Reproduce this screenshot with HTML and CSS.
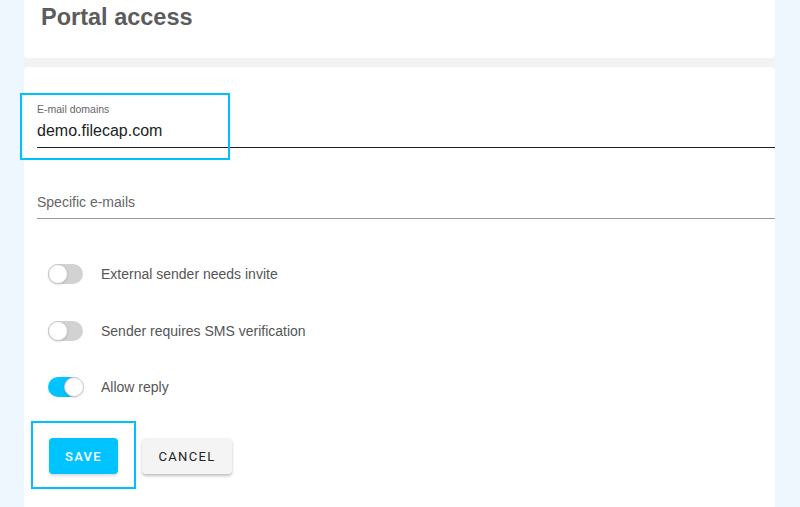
FILE: index.html
```html
<!DOCTYPE html>
<html lang="en">
<head>
    <meta charset="UTF-8">
    <meta name="viewport" content="width=device-width, initial-scale=1.0">
    <title>Portal access</title>
    <link rel="stylesheet" href="styles.css">
</head>
<body>
    <div class="page">
        <!-- header card -->
        <div class="card card-head">
            <h1 class="title">Portal access</h1>
        </div>

        <!-- settings form -->
        <form class="card card-body">
            <div class="field field-filled">
                <label class="field-label" for="domains">E-mail domains</label>
                <input class="field-input" id="domains" name="domains" type="text" value="demo.filecap.com">
                <span class="focus-box focus-field"></span>
            </div>

            <div class="field field-empty">
                <input class="field-input" id="emails" name="emails" type="text" placeholder="Specific e-mails">
            </div>

            <ul class="toggles">
                <li class="toggle-row">
                    <input class="toggle" type="checkbox" id="invite" name="invite">
                    <label for="invite">External sender needs invite</label>
                </li>
                <li class="toggle-row">
                    <input class="toggle" type="checkbox" id="sms" name="sms">
                    <label for="sms">Sender requires SMS verification</label>
                </li>
                <li class="toggle-row">
                    <input class="toggle" type="checkbox" id="reply" name="reply" checked>
                    <label for="reply">Allow reply</label>
                </li>
            </ul>

            <div class="actions">
                <div class="save-wrap">
                    <button class="btn btn-save" type="submit">Save</button>
                    <span class="focus-box focus-save"></span>
                </div>
                <button class="btn btn-cancel" type="button">Cancel</button>
            </div>
        </form>
    </div>
</body>
</html>
```

FILE: styles.css
```css
* {
    box-sizing: border-box;
}

body {
    margin: 0;
    background: #eef6fe;
    font-family: "Liberation Sans", Arial, sans-serif;
    color: #555;
}

.page {
    margin: 0 25px 0 24px;
    height: 507px;
    background: #f2f2f2;
    display: flex;
    flex-direction: column;
    gap: 9px;
}

.card {
    background: #fff;
}

/* header */

.card-head {
    height: 58px;
    padding: 3px 0 0 17px;
    border-radius: 0 0 4px 4px;
}

.title {
    margin: 0;
    font-size: 23.5px;
    line-height: 28px;
    font-weight: bold;
    color: #5c5c5c;
}

/* body */

.card-body {
    flex: 1;
    padding: 35px 0 0 13px;
    border-radius: 4px 4px 0 0;
}

.field {
    position: relative;
    display: flex;
    flex-direction: column;
}

.field-label {
    font-size: 10.5px;
    line-height: 14px;
    color: #666;
}

.field-input {
    -webkit-appearance: none;
    appearance: none;
    border: 0;
    outline: none;
    padding: 0;
    background: transparent;
    font-family: inherit;
}

.field-filled .field-input {
    margin-top: 4px;
    height: 28px;
    padding-bottom: 5px;
    font-size: 16px;
    color: #222;
    border-bottom: 1px solid #222;
}

.field-empty {
    margin-top: 41px;
}

.field-empty .field-input {
    height: 30px;
    padding-bottom: 3px;
    font-size: 14px;
    border-bottom: 1px solid #999;
}

.field-empty .field-input::placeholder {
    color: #666;
}

/* highlight frames */

.focus-box {
    position: absolute;
    border: 2px solid #00c0ff;
    pointer-events: none;
}

.focus-field {
    left: -17px;
    top: -9px;
    width: 210px;
    height: 67px;
}

.focus-save {
    left: -18px;
    top: -17px;
    width: 105px;
    height: 68px;
}

/* toggles */

.toggles {
    list-style: none;
    margin: 45px 0 0;
    padding: 0 0 0 11px;
    display: flex;
    flex-direction: column;
    gap: 36.5px;
}

.toggle-row {
    display: flex;
    align-items: center;
    gap: 18px;
    height: 20px;
    font-size: 14px;
    color: #555;
}

.toggle {
    -webkit-appearance: none;
    appearance: none;
    position: relative;
    margin: 0;
    width: 35px;
    height: 20px;
    border-radius: 10px;
    background: #d2d2d2;
    outline: none;
}

.toggle::before {
    content: '';
    position: absolute;
    top: 0;
    left: 0;
    width: 20px;
    height: 20px;
    border-radius: 50%;
    background: #fff;
    border: 1px solid #c8c8c8;
    box-sizing: border-box;
    box-shadow: 0 1px 2px rgba(0, 0, 0, 0.12);
}

.toggle:checked {
    background: #00c3ff;
}

.toggle:checked::before {
    left: 16px;
}

/* buttons */

.actions {
    margin: 41px 0 0 12px;
    display: flex;
    gap: 24px;
}

.save-wrap {
    position: relative;
}

.btn {
    height: 36px;
    border: 0;
    border-radius: 4px;
    font-family: Roboto, "Liberation Sans", sans-serif;
    font-size: 13px;
    letter-spacing: 1.3px;
    text-transform: uppercase;
    cursor: pointer;
}

.btn-save {
    width: 69px;
    background: #00c3ff;
    color: #fff;
    font-weight: 500;
    box-shadow: 0 2px 3px rgba(0, 0, 0, 0.15);
}

.btn-cancel {
    width: 90px;
    background: #f4f4f4;
    color: #222;
    box-shadow: 0 2px 3px rgba(0, 0, 0, 0.25);
}
```
